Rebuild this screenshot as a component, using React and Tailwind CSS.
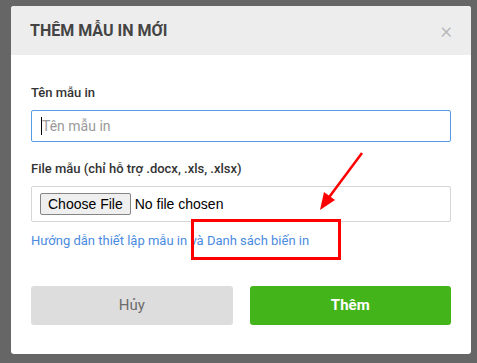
import React from 'react';

function App() {
    return (
        <div className="w-[477px] h-[363px] bg-[#666666] pt-[6px] pl-[11px] overflow-hidden" style={{ fontFamily: 'Roboto, "Liberation Sans", sans-serif' }}>
            <div className="relative w-[460px] h-[348px] bg-white rounded-[3px] overflow-hidden">
                <div className="h-[49px] bg-[#ededed] flex items-center justify-between pl-[19px] pr-[19px]">
                    <h1 className="text-[16px] font-bold text-[#444]">THÊM MẪU IN MỚI</h1>
                    <span className="text-[#b5b5b5] text-[22px] leading-none font-light">×</span>
                </div>
                <div className="px-[20px] pt-[29px]">
                    <label className="block text-[13px] leading-[18px] font-medium text-[#333]">Tên mẫu in</label>
                    <div className="mt-[8px] h-[32px] border border-[#5a9be6] rounded-[2px] flex items-center pl-[9px]">
                        <span className="w-px h-[18px] bg-black"></span>
                        <span className="text-[14px] text-[#9a9a9a]">Tên mẫu in</span>
                    </div>
                    <label className="block mt-[18px] text-[13px] leading-[18px] font-medium text-[#333]">File mẫu (chỉ hỗ trợ .docx, .xls, .xlsx)</label>
                    <div className="mt-[8px] h-[36px] border border-[#d6d6d6] rounded-[2px] flex items-center pl-[8px]" style={{ fontFamily: '"Liberation Sans", Arial, sans-serif' }}>
                        <span className="h-[22px] px-[7px] flex items-center bg-[#efefef] border border-[#858585] rounded-[2px] text-[14px] text-black">Choose File</span>
                        <span className="ml-[4px] text-[14px] text-black">No file chosen</span>
                    </div>
                    <p className="mt-[10px] text-[13px] leading-[18px] text-[#4a8be0]">Hướng dẫn thiết lập mẫu in và Danh sách biến in</p>
                    <div className="mt-[36px] flex gap-[17px]">
                        <button className="flex-1 h-[39px] rounded-[3px] bg-[#dddddd] text-[#6b6b6b] text-[15px]">Hủy</button>
                        <button className="flex-1 h-[39px] rounded-[3px] bg-[#43b51a] text-white font-bold text-[15px]">Thêm</button>
                    </div>
                </div>
                <div className="absolute left-[180px] top-[213px] w-[150px] h-[41px] border-[3px] border-[#ff0000]"></div>
                <svg className="absolute left-0 top-0" width="460" height="348" viewBox="0 0 460 348">
                    <line x1="351" y1="147" x2="316" y2="194" stroke="#ff0000" strokeWidth="2.5" />
                    <polygon points="309,204 313,186 324,194" fill="#ff0000" />
                </svg>
            </div>
        </div>
    );
}

export default App;
